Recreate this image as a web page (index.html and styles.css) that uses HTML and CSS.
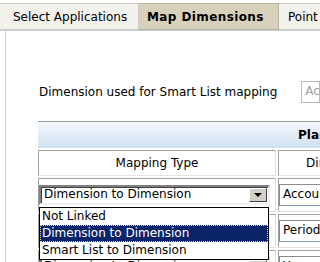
FILE: index.html
```html
<!DOCTYPE html>
<html lang="en">
<head>
    <meta charset="UTF-8">
    <title>Map Dimensions</title>
    <link rel="stylesheet" href="styles.css">
</head>
<body>
    <div class="tabs">
        <div class="tab">Select Applications</div>
        <div class="tab active">Map Dimensions</div>
        <div class="tab last">Point of View</div>
    </div>
    <div class="panel">
        <div class="smartlist">
            <span class="smartlist-label">Dimension used for Smart List mapping</span>
            <div class="textbox muted">Account</div>
        </div>

        <div class="grid">
            <div class="grid-title">Planning Application</div>

            <div class="cell head">Mapping Type</div>
            <div class="cell head">Dimension</div>

            <div class="cell">
                <div class="combo">
                    <span class="combo-text">Dimension to Dimension</span>
                    <span class="combo-btn"><span class="arrow"></span></span>
                </div>
                <!-- open dropdown of the first row -->
                <ul class="droplist">
                    <li>Not Linked</li>
                    <li class="selected">Dimension to Dimension</li>
                    <li>Smart List to Dimension</li>
                </ul>
            </div>
            <div class="cell"><div class="textbox">Account</div></div>

            <div class="cell">
                <div class="combo">
                    <span class="combo-text">Dimension to Dimension</span>
                    <span class="combo-btn"><span class="arrow"></span></span>
                </div>
            </div>
            <div class="cell"><div class="textbox">Period</div></div>

            <div class="cell">
                <div class="combo">
                    <span class="combo-text">Dimension to Dimension</span>
                    <span class="combo-btn"><span class="arrow"></span></span>
                </div>
            </div>
            <div class="cell"><div class="textbox">Year</div></div>
        </div>
    </div>
</body>
</html>
```

FILE: styles.css
```css
* {
    box-sizing: border-box;
    margin: 0;
    padding: 0;
}

body {
    font-family: 'DejaVu Sans', Verdana, sans-serif;
    font-size: 12px;
    color: #000;
    background-color: #fff;
    overflow: hidden;
    width: 320px;
    height: 262px;
}

/* tab strip */
.tabs {
    display: flex;
    margin-top: 3px;
    height: 28px;
    border-bottom: 1px solid #c3ccd8;
    white-space: nowrap;
}

.tab {
    flex: none;
    height: 27px;
    line-height: 26px;
    padding: 0 11px 0 15px;
    background-color: #f2f1ec;
    border: 1px solid #cfcdc6;
    border-left: none;
}

.tab:first-child {
    width: 139px;
    padding-left: 13px;
}

.tab.active {
    width: 140px;
    padding-left: 8px;
    background-color: #d7d0bb;
    border-color: #b9b39c;
    font-weight: bold;
    letter-spacing: 0.4px;
}

.tab.last {
    padding-left: 9px;
}

/* content area */
.panel {
    margin-left: 5px;
    border-left: 1px solid #c8cdd6;
    padding-top: 50px;
    height: 240px;
    white-space: nowrap;
}

.smartlist {
    display: flex;
    align-items: center;
    gap: 24px;
    padding-left: 33px;
    height: 22px;
}

.textbox {
    height: 22px;
    width: 110px;
    line-height: 18px;
    padding-left: 3px;
    border: 1px solid #7f9db9;
    border-top-color: #8c8c8c;
    border-left-color: #8c8c8c;
    background-color: #fff;
    overflow: hidden;
}

.textbox.muted {
    color: #a0a0a0;
    border-color: #b8b8b8;
}

.grid {
    display: grid;
    grid-template-columns: 238px 120px;
    column-gap: 2px;
    row-gap: 2px;
    margin-left: 32px;
    margin-top: 18px;
    width: 400px;
}

.grid-title {
    grid-column: 1 / 3;
    height: 27px;
    line-height: 26px;
    padding-left: 260px;
    border-top: 1px solid #9a9a9a;
    background: linear-gradient(#f5f8fc, #cfdff0);
    font-weight: bold;
}

.cell {
    position: relative;
    height: 34px;
    border: 1px solid #a0a0a0;
    border-right-color: #e2e2e2;
    border-bottom-color: #e2e2e2;
    display: flex;
    align-items: center;
}

.cell.head {
    height: 26px;
    justify-content: center;
}

/* classic combo box */
.combo {
    display: flex;
    width: 231px;
    height: 20px;
    border: 2px solid #808080;
    border-right-color: #f0f0f0;
    border-bottom-color: #f0f0f0;
    box-shadow: inset 1px 1px 0 #404040;
    background-color: #fff;
}

.combo-text {
    flex: 1;
    line-height: 15px;
    padding-left: 3px;
    overflow: hidden;
}

.combo-btn {
    width: 18px;
    margin: 1px 1px 1px 0;
    background-color: #d4d0c8;
    border: 1px solid #fff;
    border-right-color: #404040;
    border-bottom-color: #404040;
    display: flex;
    align-items: center;
    justify-content: center;
}

.arrow {
    width: 0;
    height: 0;
    border-left: 4px solid transparent;
    border-right: 4px solid transparent;
    border-top: 4px solid #000;
}

/* open dropdown, lies over the rows below */
.droplist {
    position: absolute;
    left: 0;
    top: 28px;
    width: 230px;
    list-style: none;
    border: 1px solid #000;
    background-color: #fff;
    z-index: 2;
}

.droplist li {
    height: 17px;
    line-height: 15px;
    padding-left: 1px;
    border: 1px solid transparent;
}

.droplist li.selected {
    background-color: #0a246a;
    color: #fff;
    border: 1px dotted #e6d68a;
}
```
